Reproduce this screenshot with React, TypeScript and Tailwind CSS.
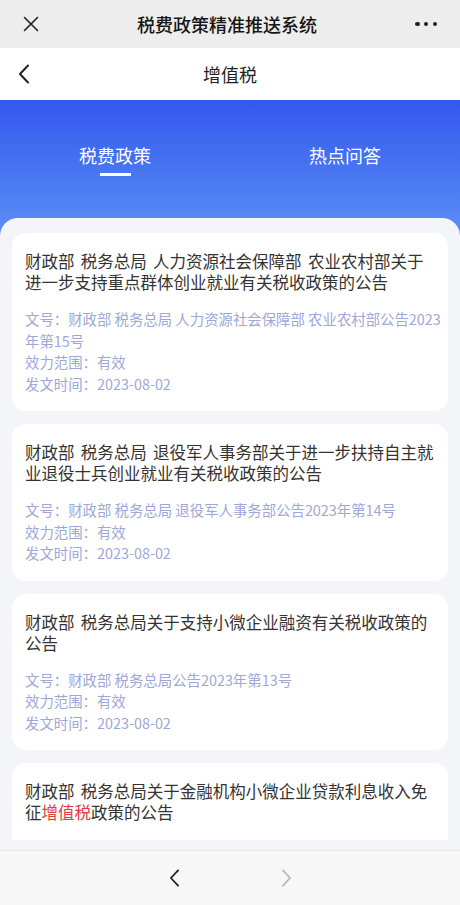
import React from "react";

type Policy = {
  title: React.ReactNode;
  docNo?: string;
  scope?: string;
  date?: string;
};

const policies: Policy[] = [
  {
    title: "财政部 税务总局 人力资源社会保障部 农业农村部关于进一步支持重点群体创业就业有关税收政策的公告",
    docNo: "财政部 税务总局 人力资源社会保障部 农业农村部公告2023年第15号",
    scope: "有效",
    date: "2023-08-02",
  },
  {
    title: "财政部 税务总局 退役军人事务部关于进一步扶持自主就业退役士兵创业就业有关税收政策的公告",
    docNo: "财政部 税务总局 退役军人事务部公告2023年第14号",
    scope: "有效",
    date: "2023-08-02",
  },
  {
    title: "财政部 税务总局关于支持小微企业融资有关税收政策的公告",
    docNo: "财政部 税务总局公告2023年第13号",
    scope: "有效",
    date: "2023-08-02",
  },
  {
    title: (
      <>
        财政部 税务总局关于金融机构小微企业贷款利息收入免征
        <span className="text-[#e23b3b]">增值税</span>政策的公告
      </>
    ),
    docNo: "财政部 税务总局公告2023年第12号",
    scope: "有效",
    date: "2023-08-02",
  },
];

function Chevron({ dir, className }: { dir: "left" | "right"; className?: string }) {
  return (
    <svg viewBox="0 0 12 20" className={className} fill="none" stroke="currentColor">
      {dir === "left" ? (
        <path d="M10 1.5 L2 10 L10 18.5" strokeWidth="2" strokeLinecap="round" strokeLinejoin="round" />
      ) : (
        <path d="M2 1.5 L10 10 L2 18.5" strokeWidth="2" strokeLinecap="round" strokeLinejoin="round" />
      )}
    </svg>
  );
}

export default function App() {
  return (
    <div
      className="flex h-[905px] w-[460px] flex-col overflow-hidden bg-[#f4f5f9]"
      style={{ fontFamily: '"Noto Sans CJK SC", "Noto Sans", sans-serif' }}
    >
      {/* wechat top bar */}
      <div className="flex h-[48px] shrink-0 items-center justify-between bg-[#ededed] px-[23px]">
        <svg viewBox="0 0 16 16" className="h-[16px] w-[16px] text-[#1f1f1f]" fill="none" stroke="currentColor">
          <path d="M1.5 1.5 L14.5 14.5 M14.5 1.5 L1.5 14.5" strokeWidth="1.6" strokeLinecap="round" />
        </svg>
        <div className="text-[18px] font-medium text-[#161616]">税费政策精准推送系统</div>
        <div className="flex w-[22px] items-center justify-between">
          <span className="h-[4.5px] w-[4.5px] rounded-full bg-[#222]" />
          <span className="h-[4.5px] w-[4.5px] rounded-full bg-[#222]" />
          <span className="h-[4.5px] w-[4.5px] rounded-full bg-[#222]" />
        </div>
      </div>

      {/* page nav */}
      <div className="relative flex h-[52px] shrink-0 items-center justify-center bg-white">
        <Chevron dir="left" className="absolute left-[18px] top-[16px] h-[20px] w-[12px] text-[#222]" />
        <div className="text-[18px] text-[#1f1f1f]">增值税</div>
      </div>

      {/* tabs */}
      <div className="h-[138px] shrink-0 bg-gradient-to-b from-[#3656ee] to-[#5d8ff4] pt-[43px]">
        <div className="flex">
          <div className="flex flex-1 flex-col items-center">
            <div className="text-[18px] leading-[24px] text-white">税费政策</div>
            <div className="mt-[6px] h-[3px] w-[31px] bg-white" />
          </div>
          <div className="flex flex-1 flex-col items-center">
            <div className="text-[18px] leading-[24px] text-white">热点问答</div>
          </div>
        </div>
      </div>

      {/* list */}
      <div className="relative -mt-[20px] flex min-h-0 flex-1 flex-col rounded-t-[18px] bg-[#f4f5f9] px-[12px] pb-[10px] pt-[15px]">
        <div className="flex min-h-0 flex-1 flex-col gap-[13px] overflow-hidden">
          {policies.map((p, i) => (
            <div key={i} className="shrink-0 rounded-[14px] bg-white pb-[17px] pl-[13px] pt-[18px]">
              <div className="w-[411px] text-[16.5px] leading-[21px] text-[#333] [word-spacing:2.6px]">
                {p.title}
              </div>
              <div className="mt-[15px] text-[14.4px] leading-[21.5px] text-[#9ea7d8]">
                <div>文号：{p.docNo}</div>
                <div>效力范围：{p.scope}</div>
                <div>发文时间：{p.date}</div>
              </div>
            </div>
          ))}
        </div>
      </div>

      {/* bottom toolbar */}
      <div className="flex h-[55px] shrink-0 items-center justify-center gap-[101px] border-t border-[#e6e6e6] bg-[#f7f7f7]">
        <Chevron dir="left" className="h-[18px] w-[11px] text-[#222]" />
        <Chevron dir="right" className="h-[18px] w-[11px] text-[#b8b8b8]" />
      </div>
    </div>
  );
}
